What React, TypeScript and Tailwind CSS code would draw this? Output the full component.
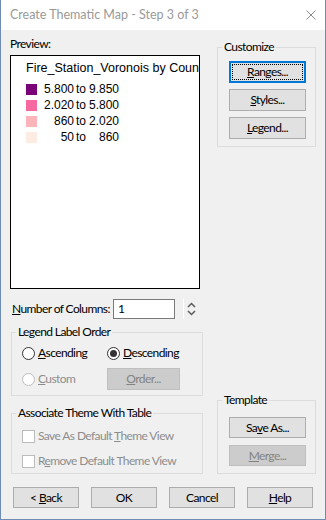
import React from "react";

const UI = "font-['Lato',sans-serif]";

function Btn({
  children,
  className = "",
  disabled = false,
  focused = false,
}: {
  children: React.ReactNode;
  className?: string;
  disabled?: boolean;
  focused?: boolean;
}) {
  const base = "relative flex items-center justify-center text-[12px] leading-none";
  const look = disabled
    ? "bg-[#cccccc] border border-[#bfbfbf] text-[#838383]"
    : focused
    ? "bg-[#e1e1e1] border-2 border-[#0078d7] text-black"
    : "bg-[#e1e1e1] border border-[#adadad] text-black";
  return (
    <div className={`${base} ${look} ${className}`}>
      {focused && <div className="absolute inset-[1px] border border-dotted border-black" />}
      <span>{children}</span>
    </div>
  );
}

function Radio({ checked = false, disabled = false }: { checked?: boolean; disabled?: boolean }) {
  return (
    <span
      className={`w-[13px] h-[13px] shrink-0 rounded-full border bg-white flex items-center justify-center ${
        disabled ? "border-[#bcbcbc]" : "border-[#333333]"
      }`}
    >
      {checked && <span className="w-[7px] h-[7px] rounded-full bg-[#333333]" />}
    </span>
  );
}

function Check() {
  return <span className="w-[13px] h-[13px] shrink-0 border border-[#bcbcbc] bg-white" />;
}

const rows = [
  { c: "#7a0177", a: "5.800", b: "9.850" },
  { c: "#f768a1", a: "2.020", b: "5.800" },
  { c: "#fbb4b9", a: "860", b: "2.020" },
  { c: "#feebe2", a: "50", b: "860" },
];

export default function App() {
  return (
    <div
      className={`w-[326px] h-[520px] bg-[#f0f0f0] border border-t-0 border-[#6f8cb5] flex flex-col ${UI} text-black overflow-hidden`}
    >
      {/* Title bar */}
      <div className="h-[30px] shrink-0 bg-white flex items-center justify-between pl-[9px] pr-[9px]">
        <span className="text-[12.5px] text-[#999999] leading-none">Create Thematic Map - Step 3 of 3</span>
        <svg width="10" height="10" viewBox="0 0 10 10">
          <path d="M0.5 0.5 L9.5 9.5 M9.5 0.5 L0.5 9.5" stroke="#8a8a8a" strokeWidth="1" />
        </svg>
      </div>

      {/* Main */}
      <div className="flex mt-[7px] ml-[9px] tracking-[-0.6px]">
        {/* Left column */}
        <div className="w-[193px] flex flex-col">
          <div className="h-[14px] leading-[14px] text-[12px]">Preview:</div>
          <div className="mt-[4px] w-[190px] h-[234px] border border-black bg-white overflow-hidden pl-[15px] pt-[5px] font-['Liberation_Sans',Arial,sans-serif] tracking-normal">
            <div className="text-[12.5px] leading-[15px] whitespace-nowrap">Fire_Station_Voronois by County</div>
            <div className="mt-[5px] flex flex-col">
              {rows.map((r) => (
                <div key={r.a} className="h-[16px] flex items-center text-[12px] leading-none">
                  <span className="w-[11px] h-[11px] shrink-0" style={{ backgroundColor: r.c }} />
                  <span className="w-[37px] text-right">{r.a}</span>
                  <span className="ml-[2px] w-[10px]">to</span>
                  <span className="w-[33px] text-right">{r.b}</span>
                </div>
              ))}
            </div>
          </div>

          {/* Number of columns */}
          <div className="mt-[10px] h-[20px] flex items-center">
            <span className="ml-[2px] w-[101px] text-[12px] leading-none whitespace-nowrap">
              <span className="underline">N</span>umber of Columns:
            </span>
            <div className="w-[62px] h-[20px] border border-[#7a7a7a] bg-white pl-[4px] flex items-center text-[12px] leading-none">
              1
            </div>
            <span className="ml-[8px] w-px h-[20px] bg-white" />
            <svg className="ml-[3px]" width="9" height="16" viewBox="0 0 9 16">
              <path d="M1 6 L4.5 2.5 L8 6" fill="none" stroke="#5a5a5a" strokeWidth="1.5" />
              <path d="M1 10 L4.5 13.5 L8 10" fill="none" stroke="#5a5a5a" strokeWidth="1.5" />
            </svg>
          </div>

          {/* Legend Label Order */}
          <fieldset className="mt-[6px] ml-px w-[192px] border border-[#dcdcdc] p-0 m-0 min-w-0">
            <legend className="ml-[4px] px-[2px] text-[12px] leading-[14px]">Legend Label Order</legend>
            <div className="pt-[6px] pl-[10px] pb-[5px]">
              <div className="h-[16px] flex items-center text-[12px] leading-none">
                <div className="w-[85px] flex items-center">
                  <Radio />
                  <span className="ml-[3px]">
                    <span className="underline">A</span>scending
                  </span>
                </div>
                <div className="flex items-center">
                  <Radio checked />
                  <span className="ml-[3px]">
                    <span className="underline">D</span>escending
                  </span>
                </div>
              </div>
              <div className="mt-[7px] h-[22px] flex items-center text-[12px] leading-none">
                <div className="w-[85px] flex items-center text-[#8d8d8d]">
                  <Radio disabled />
                  <span className="ml-[3px]">
                    <span className="underline">C</span>ustom
                  </span>
                </div>
                <Btn disabled className="w-[73px] h-[22px]">
                  <span className="underline">O</span>rder...
                </Btn>
              </div>
            </div>
          </fieldset>

          {/* Associate Theme With Table */}
          <fieldset className="mt-[10px] ml-px w-[192px] border border-[#dcdcdc] p-0 m-0 min-w-0">
            <legend className="ml-[4px] px-[2px] text-[12px] leading-[14px]">Associate Theme With Table</legend>
            <div className="pt-[8px] pl-[10px] pb-[4px] text-[#8d8d8d] text-[12px] leading-none">
              <div className="h-[16px] flex items-center">
                <Check />
                <span className="ml-[3px] whitespace-nowrap">
                  Save As Default <span className="underline">T</span>heme View
                </span>
              </div>
              <div className="mt-[9px] h-[16px] flex items-center">
                <Check />
                <span className="ml-[3px] whitespace-nowrap">
                  R<span className="underline">e</span>move Default Theme View
                </span>
              </div>
            </div>
          </fieldset>
        </div>

        {/* Right column */}
        <div className="ml-[14px] mt-[3px] w-[99px] flex flex-col justify-between">
          <fieldset className="border border-[#dcdcdc] p-0 m-0 min-w-0">
            <legend className="ml-[4px] px-[2px] text-[12px] leading-[14px]">Customize</legend>
            <div className="pt-[7px] pl-[11px] pb-[7px] flex flex-col gap-[6px]">
              <Btn focused className="w-[77px] h-[22px]">
                <span className="underline">R</span>anges...
              </Btn>
              <Btn className="w-[77px] h-[22px]">
                <span className="underline">S</span>tyles...
              </Btn>
              <Btn className="w-[77px] h-[22px]">
                <span className="underline">L</span>egend...
              </Btn>
            </div>
          </fieldset>

          <fieldset className="border border-[#dcdcdc] p-0 m-0 min-w-0">
            <legend className="ml-[4px] px-[2px] text-[12px] leading-[14px]">Template</legend>
            <div className="pt-[10px] pl-[11px] pb-[7px] flex flex-col gap-[7px]">
              <Btn className="w-[77px] h-[21px]">
                Sa<span className="underline">v</span>e As...
              </Btn>
              <Btn disabled className="w-[77px] h-[21px]">
                <span className="underline">M</span>erge...
              </Btn>
            </div>
          </fieldset>
        </div>
      </div>

      {/* Bottom buttons */}
      <div className="mt-[13px] ml-[12px] flex gap-[12px] tracking-[-0.6px]">
        <Btn className="w-[66px] h-[21px]">
          &lt; <span className="underline">B</span>ack
        </Btn>
        <Btn className="w-[66px] h-[21px]">OK</Btn>
        <Btn className="w-[66px] h-[21px]">Cancel</Btn>
        <Btn className="w-[66px] h-[21px]">
          <span className="underline">H</span>elp
        </Btn>
      </div>
    </div>
  );
}
